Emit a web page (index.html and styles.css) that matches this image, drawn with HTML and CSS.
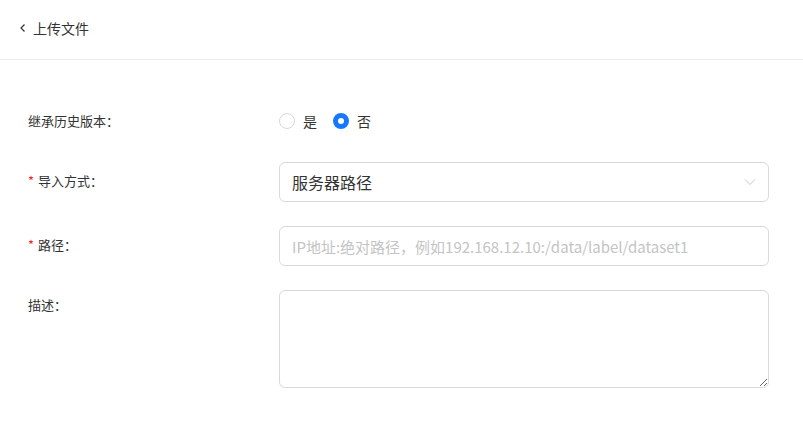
FILE: index.html
```html
<!DOCTYPE html>
<html lang="zh-CN">
<head>
    <meta charset="UTF-8">
    <meta name="viewport" content="width=device-width, initial-scale=1.0">
    <title>上传文件</title>
    <link rel="stylesheet" href="styles.css">
</head>
<body>
    <header class="page-header">
        <span class="back-icon">
            <svg width="8" height="10" viewBox="0 0 8 10"><path d="M5.5 1.5 L2 5 L5.5 8.5" fill="none" stroke="#333" stroke-width="1.2"/></svg>
        </span>
        <span class="page-title">上传文件</span>
    </header>
    <main class="upload-form">
        <!-- 继承历史版本 -->
        <div class="form-row row-radio">
            <label class="form-label">继承历史版本：</label>
            <div class="form-control radio-group">
                <span class="radio"><span class="radio-dot"></span>是</span>
                <span class="radio checked"><span class="radio-dot"></span>否</span>
            </div>
        </div>
        <!-- 导入方式 -->
        <div class="form-row">
            <label class="form-label"><span class="required">*</span>导入方式：</label>
            <div class="form-control">
                <div class="select">
                    <span>服务器路径</span>
                    <svg width="12" height="8" viewBox="0 0 12 8"><path d="M1 1.5 L6 6.5 L11 1.5" fill="none" stroke="#c8c8c8" stroke-width="1"/></svg>
                </div>
            </div>
        </div>
        <!-- 路径 -->
        <div class="form-row">
            <label class="form-label"><span class="required">*</span>路径：</label>
            <div class="form-control">
                <input class="input" type="text" placeholder="IP地址:绝对路径，例如192.168.12.10:/data/label/dataset1">
            </div>
        </div>
        <!-- 描述 -->
        <div class="form-row row-textarea">
            <label class="form-label">描述：</label>
            <div class="form-control">
                <textarea class="textarea"></textarea>
            </div>
        </div>
    </main>
</body>
</html>
```

FILE: styles.css
```css
/* 页面基础样式 */
body {
    margin: 0;
    font-family: "Noto Sans CJK SC", "Noto Sans", sans-serif;
    color: #333;
    background-color: #fff;
}

/* 顶部标题栏 */
.page-header {
    height: 56px;
    padding-bottom: 3px;
    border-bottom: 1px solid #ebebeb;
    display: flex;
    align-items: center;
    padding-left: 19px;
    font-size: 14px;
}

.back-icon {
    display: flex;
    width: 14px;
}

.page-title {
    color: #333;
}

/* 表单区域 */
.upload-form {
    padding: 46px 34px 0 28px;
}

.form-row {
    display: flex;
    align-items: center;
    margin-bottom: 24px;
}

.row-textarea {
    align-items: flex-start;
}

.form-label {
    width: 251px;
    font-size: 13px;
    color: #333;
    line-height: 30px;
    padding-bottom: 2px;
}

.row-textarea .form-label {
    padding-bottom: 0;
}

.required {
    color: #f5222d;
    margin-right: 4px;
}

.form-control {
    flex: 1;
}

/* 单选框 */
.radio-group {
    display: flex;
    align-items: center;
    height: 30px;
    padding-bottom: 2px;
    font-size: 14px;
}

.radio {
    display: flex;
    align-items: center;
    margin-right: 16px;
}

.radio-dot {
    width: 14px;
    height: 14px;
    border: 1px solid #d9d9d9;
    border-radius: 50%;
    margin-right: 8px;
    box-sizing: content-box;
}

.radio.checked .radio-dot {
    width: 6px;
    height: 6px;
    border: 5px solid #1677ff;
}

/* 下拉框与输入框 */
.select,
.input {
    box-sizing: border-box;
    width: 100%;
    height: 40px;
    border: 1px solid #d9d9d9;
    border-radius: 6px;
    padding: 0 12px;
    font-size: 16px;
    font-family: inherit;
    color: #333;
}

.select {
    display: flex;
    align-items: center;
    justify-content: space-between;
}

.input {
    outline: none;
    font-size: 15px;
}

.input::placeholder {
    color: #c4c4c4;
}

.textarea {
    display: block;
    box-sizing: border-box;
    width: 100%;
    height: 98px;
    border: 1px solid #d9d9d9;
    border-radius: 6px;
    font-family: inherit;
    font-size: 16px;
    padding: 6px 12px;
    outline: none;
}
```
